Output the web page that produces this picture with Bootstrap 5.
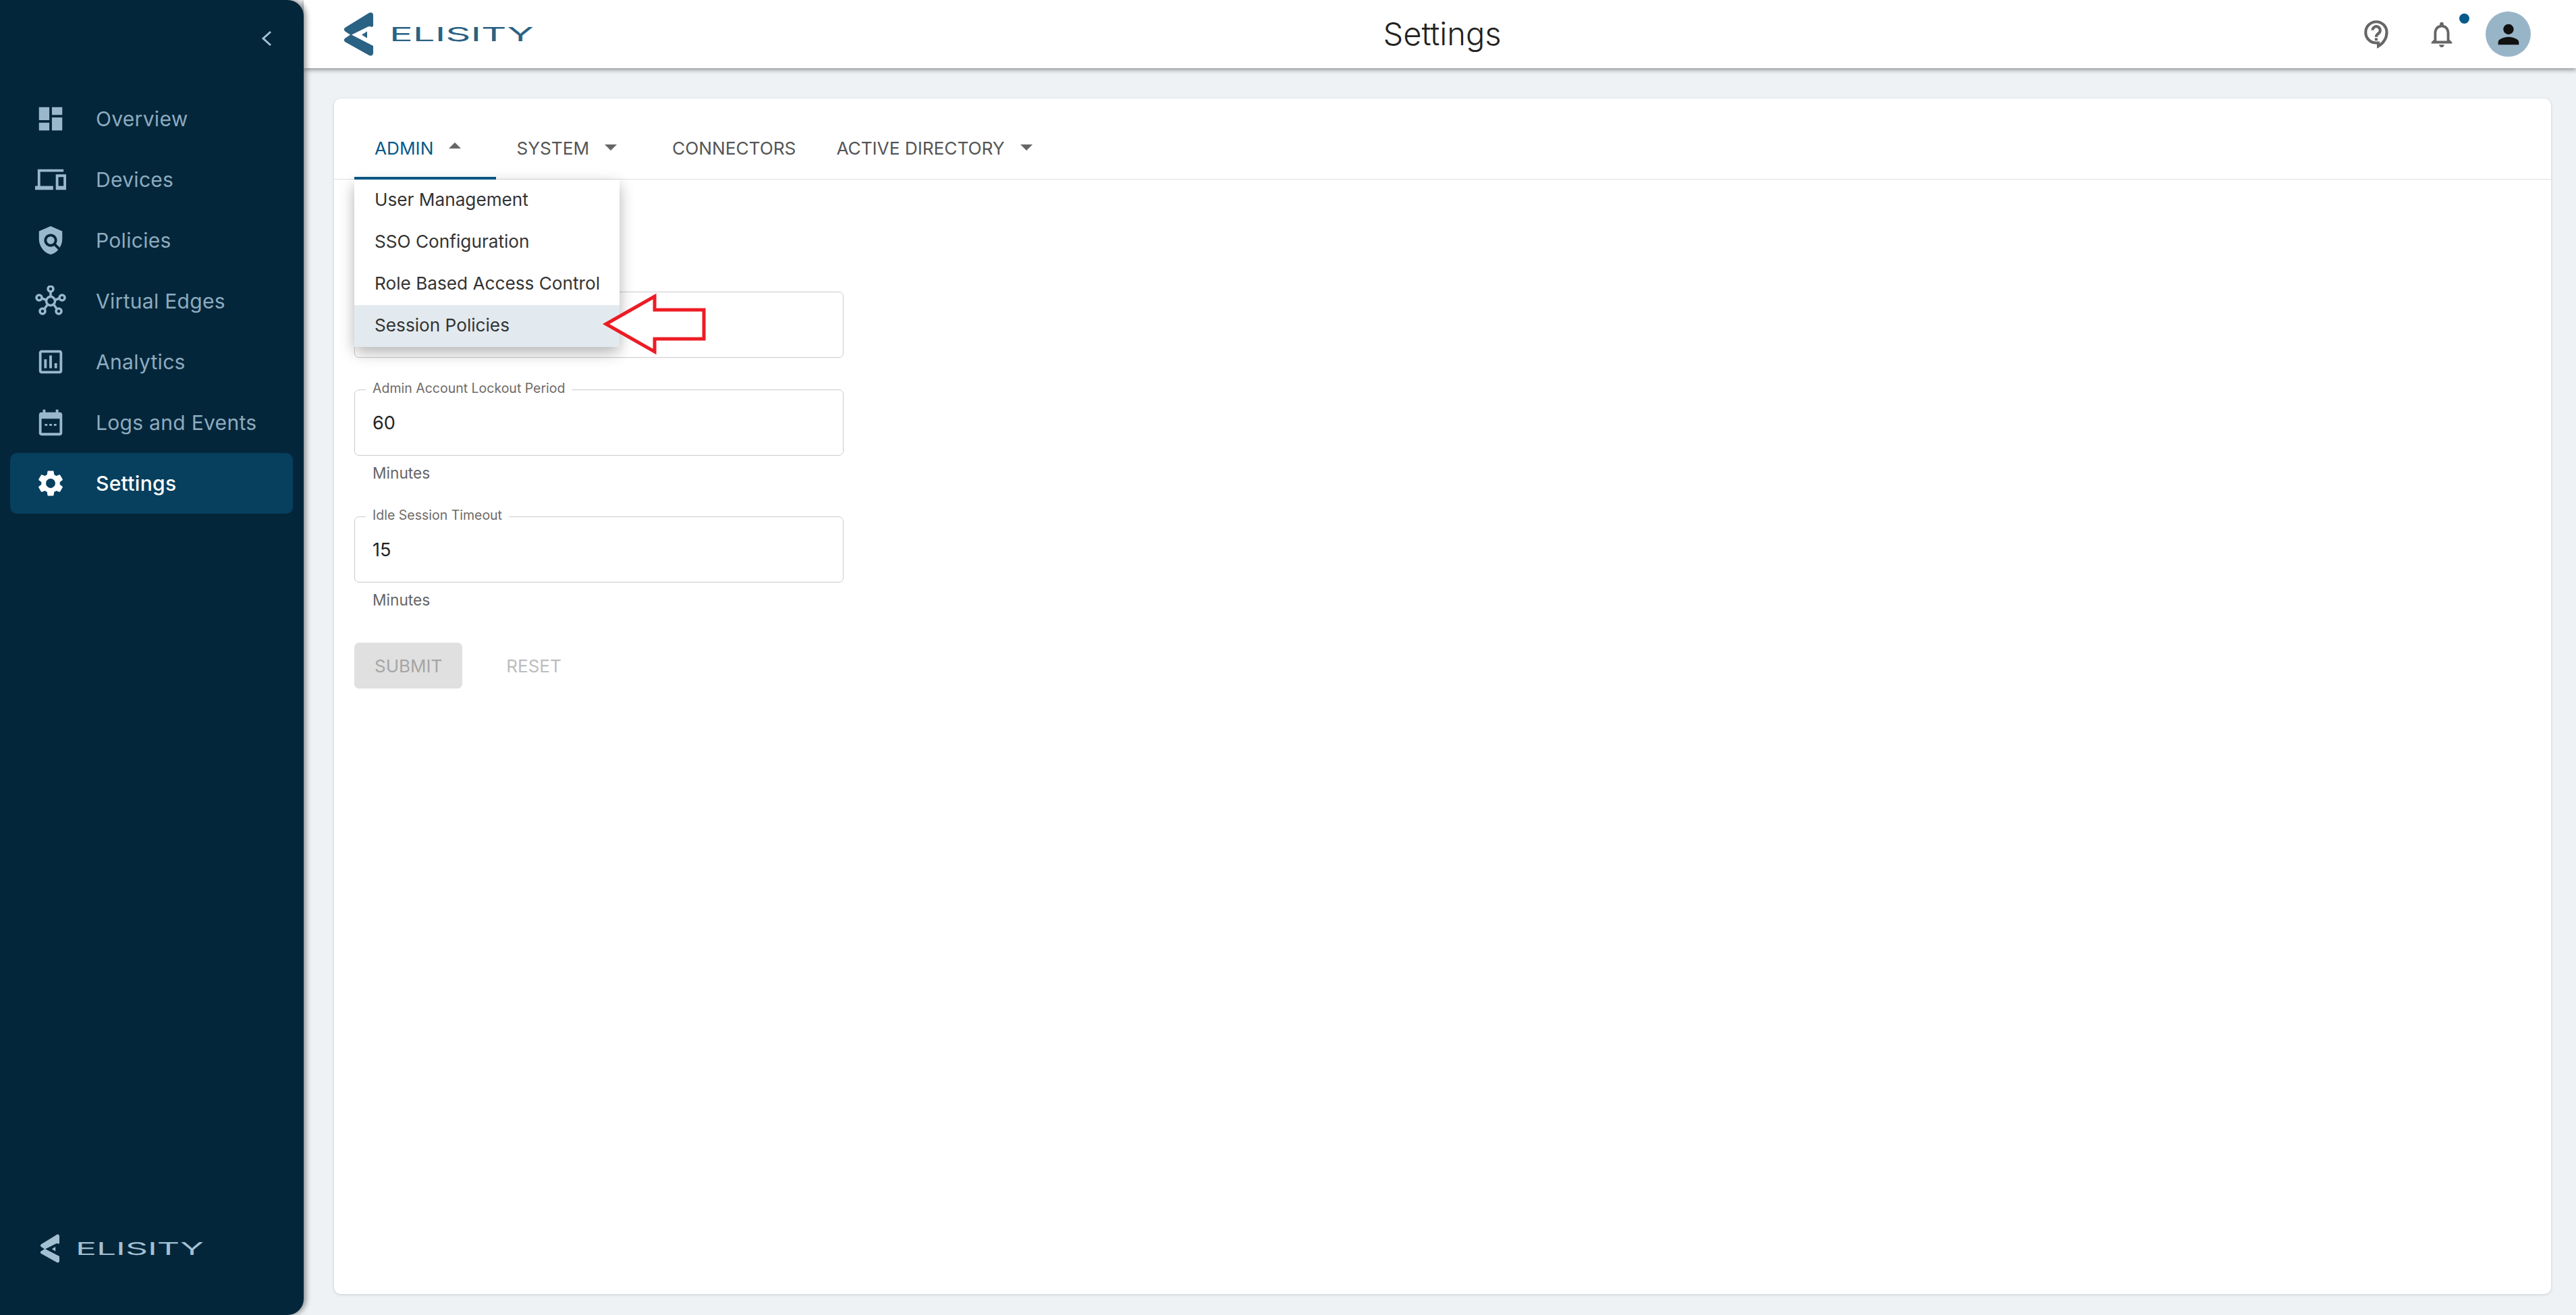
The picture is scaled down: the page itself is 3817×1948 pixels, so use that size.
<!doctype html>
<html lang="en">
  <head>
    <meta charset="utf-8">
    <meta name="viewport" content="width=device-width, initial-scale=1">
    <title>Settings</title>
    <link href="https://cdn.jsdelivr.net/npm/bootstrap@5.3.3/dist/css/bootstrap.min.css" rel="stylesheet">
    <style>
      body { font-family: Inter, "Liberation Sans", sans-serif; background: #eef2f5; color: #333; }
      a { text-decoration: none; }
      .word-mark { overflow: visible; flex: none; }

      /* sidebar */
      .side-bar { width: 450px; flex: none; background: #04263a; border-radius: 0 24px 24px 0; box-shadow: 3px 0 8px rgba(0,0,0,.45); z-index: 3; }
      .side-toggle { height: 131px; padding: 45px 47px 0 0; color: #a3c0d2; }
      .side-link { height: 90px; margin: 0 16px 0 15px; padding: 0 0 0 37px; gap: 44px; border-radius: 10px; color: #8dabbf; font-size: 30px; letter-spacing: .3px; }
      .side-link svg { width: 46px; height: 46px; fill: #9ab8cb; flex: none; }
      .side-link.active { background: #073f5e; color: #fff; font-weight: 500; }
      .side-link.active svg { fill: #fff; }
      .side-logo { padding: 0 0 77px 60px; color: #a3c0d2; }

      /* top bar */
      .top-bar { height: 101px; padding: 0 67px 0 60px; background: #fff; box-shadow: 0 2px 7px rgba(0,0,0,.45); z-index: 2; }
      .top-side { flex: 1 1 0; }
      .top-title { font-size: 47px; font-weight: 300; color: #222; margin: 0 0 0 14px; }
      .top-logo { color: #2a6283; }
      .help-icon { width: 50px; height: 50px; margin-right: -2px; }
      .bell-icon { width: 46px; height: 46px; margin-left: 50px; fill: #666; }
      .bell-dot { position: absolute; top: -8px; right: -18px; width: 15px; height: 15px; border-radius: 50%; background: #075a8a; }
      .user-pic { width: 67px; height: 67px; margin-left: 42px; border-radius: 50%; background: #98b5c8; }
      .user-pic svg { width: 46px; height: 46px; fill: #111; }

      /* content */
      .page-area { padding: 45px 37px 31px 45px; }
      .main-card { border: 0; border-radius: 10px; box-shadow: 0 1px 4px rgba(0,0,0,.15); }

      .tab-strip { height: 120px; padding-left: 30px; border-bottom: 1px solid #e0e0e0; }
      .tab-link { display: block; height: 120px; padding: 58px 30px 0; color: #555; font-size: 26.2px; line-height: 32px; text-transform: uppercase; white-space: nowrap; }
      .tab-link:hover { color: #555; }
      .tab-link.dropdown-toggle::after { margin-left: 23px; margin-right: 22px; vertical-align: 6px; border-top: 9px solid #666; border-left: 9px solid transparent; border-right: 9px solid transparent; border-bottom: 0; }
      .tab-link.show { color: #075a8a; border-bottom: 4px solid #075a8a; }
      .tab-link.show::after { border-top: 0; border-bottom: 9px solid #666; vertical-align: 9px; }

      .tab-menu { width: 393px; margin: 0; padding: 0; border: 0; border-radius: 0 0 8px 8px; box-shadow: 0 8px 22px rgba(0,0,0,.3); z-index: 5; }
      .tab-menu .dropdown-item { height: 62px; padding: 0 30px; line-height: 60px; font-size: 26.2px; color: #333; }
      .tab-menu .dropdown-item.active { background: #e2eaef; color: #333; }

      .form-area { padding: 166px 0 0 30px; width: 755px; }
      .field-box { position: relative; margin-bottom: 47px; }
      .field-box input { height: 98px; padding: 0 26px; border: 1.5px solid #cacaca; border-radius: 7px; font-size: 27px; color: #222; }
      .field-box label { position: absolute; top: -15px; left: 17px; padding: 0 10px; background: #fff; font-size: 19.500px; line-height: 26px; color: #6f6a66; }
      .field-hint { margin: -37px 0 48px; padding-left: 27px; font-size: 22.700px; line-height: 32px; color: #666; }
      .form-btns { margin-top: -1px; }

      .btn-send, .btn-clear { height: 68px; padding: 0 30px; border: 0; border-radius: 7px; font-size: 26px; opacity: 1 !important; }
      .btn-send { background: #e0e0e0 !important; color: #a6a6a6 !important; }
      .btn-clear { margin-left: 35px; color: #bdbdbd !important; }

      .red-arrow { position: absolute; left: 890px; top: 432px; width: 160px; height: 96px; z-index: 6; }
    </style>
  </head>
  <body class="d-flex vh-100 overflow-hidden position-relative">

    <!-- logo mark, used twice -->
    <svg width="0" height="0" class="position-absolute">
      <symbol id="elisity-mark" viewBox="10 8 43 64">
        <path fill-rule="evenodd" d="M47 8.500c3-1.500 6 0 6 3.500V27c0 2-2 3-3.500 2-1.200-.8-2.600-.8-4 0L21 41l32 16.500V68c0 3.500-3 5-6 3.500L12 52c-3-1.800-3-4.500 0-6.200l7-4.800-7-4.600c-3-1.800-3-4.500 0-6.400zM36 41l8-5v10z"/>
      </symbol>
    </svg>

    <!-- sidebar -->
    <aside class="side-bar d-flex flex-column">
      <div class="side-toggle d-flex justify-content-end">
        <svg width="16" height="24" viewBox="0 0 16 24" fill="none" stroke="currentColor" stroke-width="3"><path d="M14 2 3 12l11 10"/></svg>
      </div>
      <nav class="nav flex-column">
        <a class="nav-link side-link d-flex align-items-center" href="#">
          <svg viewBox="0 0 24 24"><path d="M3 13h8V3H3v10zm0 8h8v-6H3v6zm10 0h8V11h-8v10zm0-18v6h8V3h-8z"/></svg>Overview
        </a>
        <a class="nav-link side-link d-flex align-items-center" href="#">
          <svg viewBox="0 0 24 24"><path d="M4 6h18V4H2v13H0v3h14v-3H4V6zm12 2v12h8V8h-8zm6 9h-4v-7h4v7z"/></svg>Devices
        </a>
        <a class="nav-link side-link d-flex align-items-center" href="#">
          <svg viewBox="0 0 24 24"><path d="M21 5l-9-4-9 4v6c0 5.550 3.840 10.740 9 12 2.300-.56 4.330-1.900 5.880-3.710l-3.120-3.120c-1.940 1.290-4.580 1.070-6.290-.64-1.950-1.950-1.950-5.120 0-7.070 1.950-1.950 5.120-1.950 7.070 0 1.710 1.710 1.920 4.350.64 6.290l2.900 2.900C20.290 15.690 21 13.380 21 11V5z"/><circle cx="12" cy="12" r="3"/></svg>Policies
        </a>
        <a class="nav-link side-link d-flex align-items-center" href="#">
          <svg viewBox="0 0 46 46"><g fill="none" stroke="#9ab8cb" stroke-width="3.500"><circle cx="23" cy="23" r="6.500"/><circle cx="23" cy="5" r="4"/><circle cx="6" cy="18" r="4"/><circle cx="40" cy="18" r="4"/><circle cx="11" cy="38" r="4"/><circle cx="35" cy="38" r="4"/><path d="M23 9v7.500M10 19l7 2.500M36 19l-7 2.500M13.500 35l5-7M32.500 35l-5-7"/></g></svg>Virtual Edges
        </a>
        <a class="nav-link side-link d-flex align-items-center" href="#">
          <svg viewBox="0 0 24 24"><path d="M19 3H5c-1.100 0-2 .9-2 2v14c0 1.100.9 2 2 2h14c1.100 0 2-.9 2-2V5c0-1.100-.9-2-2-2zm0 16H5V5h14v14zM7 10h2v7H7zm4-3h2v10h-2zm4 6h2v4h-2z"/></svg>Analytics
        </a>
        <a class="nav-link side-link d-flex align-items-center" href="#">
          <svg viewBox="0 0 24 24"><path d="M19 4h-1V2h-2v2H8V2H6v2H5a2 2 0 0 0-2 2v14a2 2 0 0 0 2 2h14a2 2 0 0 0 2-2V6a2 2 0 0 0-2-2zm0 16H5V9h14v11zM7.500 13h2v1.500h-2zm3.500 0h2v1.500h-2zm3.500 0h2v1.500h-2z"/></svg>Logs and Events
        </a>
        <a class="nav-link side-link active d-flex align-items-center" href="#">
          <svg viewBox="0 0 24 24"><path d="M19.140 12.940c.04-.3.06-.61.06-.94 0-.32-.02-.64-.07-.94l2.030-1.580c.18-.14.23-.41.12-.61l-1.920-3.320c-.12-.22-.37-.29-.59-.22l-2.390.96c-.5-.38-1.030-.7-1.620-.94l-.36-2.540c-.04-.24-.24-.41-.48-.41h-3.840c-.24 0-.43.17-.47.41l-.36 2.540c-.59.24-1.130.57-1.620.94l-2.390-.96c-.22-.08-.47 0-.59.22L2.740 8.870c-.12.21-.08.47.12.61l2.030 1.580c-.05.3-.09.63-.09.94s.02.64.07.94l-2.030 1.580c-.18.14-.23.41-.12.61l1.920 3.320c.12.22.37.29.59.22l2.390-.96c.5.38 1.030.7 1.620.94l.36 2.540c.05.24.24.41.48.41h3.840c.24 0 .44-.17.47-.41l.36-2.540c.59-.24 1.130-.56 1.620-.94l2.390.96c.22.08.47 0 .59-.22l1.920-3.320c.12-.22.07-.47-.12-.61l-2.010-1.580zM12 15.600c-1.980 0-3.600-1.620-3.600-3.600s1.620-3.600 3.600-3.600 3.600 1.620 3.600 3.600-1.620 3.600-3.600 3.600z"/></svg>Settings
        </a>
      </nav>
      <div class="side-logo mt-auto d-flex align-items-center">
        <svg width="28" height="43" fill="currentColor"><use href="#elisity-mark"/></svg>
        <svg width="200" height="30" class="word-mark ms-4" fill="currentColor"><text x="0" y="24" font-size="26" textLength="190" lengthAdjust="spacingAndGlyphs">ELISITY</text></svg>
      </div>
    </aside>

    <div class="flex-grow-1 d-flex flex-column" style="min-width:0">
      <!-- top bar -->
      <header class="top-bar d-flex align-items-center">
        <div class="top-side top-logo d-flex align-items-center">
          <svg width="43" height="65" fill="currentColor"><use href="#elisity-mark"/></svg>
          <svg width="230" height="34" class="word-mark ms-4" fill="currentColor"><text x="0" y="27" font-size="29" textLength="214" lengthAdjust="spacingAndGlyphs">ELISITY</text></svg>
        </div>
        <h1 class="top-title">Settings</h1>
        <div class="top-side d-flex align-items-center justify-content-end">
          <svg class="help-icon" viewBox="0 0 24 24" fill="none" stroke="#666" stroke-width="2"><path d="M11.500 3C7.360 3 4 6.360 4 10.500S7.360 18 11.500 18H13v2.400c3.600-2 6-5.900 6-9.900C19 6.360 15.640 3 11.500 3z"/><path d="M8.900 9a2.700 2.700 0 1 1 4.200 2.300c-1 .7-1.600 1.200-1.600 2.500"/><path d="M11.500 14.600v1.800"/></svg>
          <div class="position-relative">
            <svg class="bell-icon d-block" viewBox="0 0 24 24"><path d="M12 22c1.100 0 2-.9 2-2h-4c0 1.100.9 2 2 2zm6-6v-5c0-3.070-1.630-5.640-4.500-6.320V4c0-.83-.67-1.500-1.500-1.500s-1.500.67-1.500 1.500v.68C7.640 5.360 6 7.920 6 11v5l-2 2v1h16v-1l-2-2zm-2 1H8v-6c0-2.480 1.510-4.500 4-4.500s4 2.020 4 4.500v6z"/></svg>
            <span class="bell-dot"></span>
          </div>
          <div class="user-pic d-flex align-items-center justify-content-center">
            <svg viewBox="0 0 24 24"><path d="M12 12c2.210 0 4-1.790 4-4s-1.790-4-4-4-4 1.790-4 4 1.790 4 4 4zm0 2c-2.670 0-8 1.340-8 4v2h16v-2c0-2.660-5.330-4-8-4z"/></svg>
          </div>
        </div>
      </header>

      <!-- settings card -->
      <main class="page-area flex-grow-1 d-flex">
        <div class="card main-card flex-grow-1 position-relative">
          <ul class="nav tab-strip">
            <li class="dropdown position-relative">
              <a class="tab-link dropdown-toggle show" href="#">Admin</a>
              <div class="dropdown-menu show tab-menu">
                <a class="dropdown-item" href="#">User Management</a>
                <a class="dropdown-item" href="#">SSO Configuration</a>
                <a class="dropdown-item" href="#">Role Based Access Control</a>
                <a class="dropdown-item active" href="#">Session Policies</a>
              </div>
            </li>
            <li><a class="tab-link dropdown-toggle" href="#">System</a></li>
            <li><a class="tab-link" href="#">Connectors</a></li>
            <li><a class="tab-link dropdown-toggle" href="#">Active Directory</a></li>
          </ul>

          <form class="form-area">
            <div class="field-box">
              <input class="form-control" type="text" aria-label="Session setting">
            </div>
            <div class="field-box">
              <label>Admin Account Lockout Period</label>
              <input class="form-control" type="text" value="60">
            </div>
            <div class="field-hint">Minutes</div>
            <div class="field-box">
              <label>Idle Session Timeout</label>
              <input class="form-control" type="text" value="15">
            </div>
            <div class="field-hint">Minutes</div>
            <div class="form-btns d-flex">
              <button class="btn btn-send" type="button" disabled>SUBMIT</button>
              <button class="btn btn-clear" type="button" disabled>RESET</button>
            </div>
          </form>
        </div>
      </main>
    </div>

    <!-- annotation arrow -->
    <svg class="red-arrow" viewBox="890 432 160 96"><path d="M898 480l72-41v20h73v43h-73v19z" fill="#fff" stroke="#ed1c24" stroke-width="5"/></svg>

    <script src="https://cdn.jsdelivr.net/npm/bootstrap@5.3.3/dist/js/bootstrap.bundle.min.js"></script>
  </body>
</html>
